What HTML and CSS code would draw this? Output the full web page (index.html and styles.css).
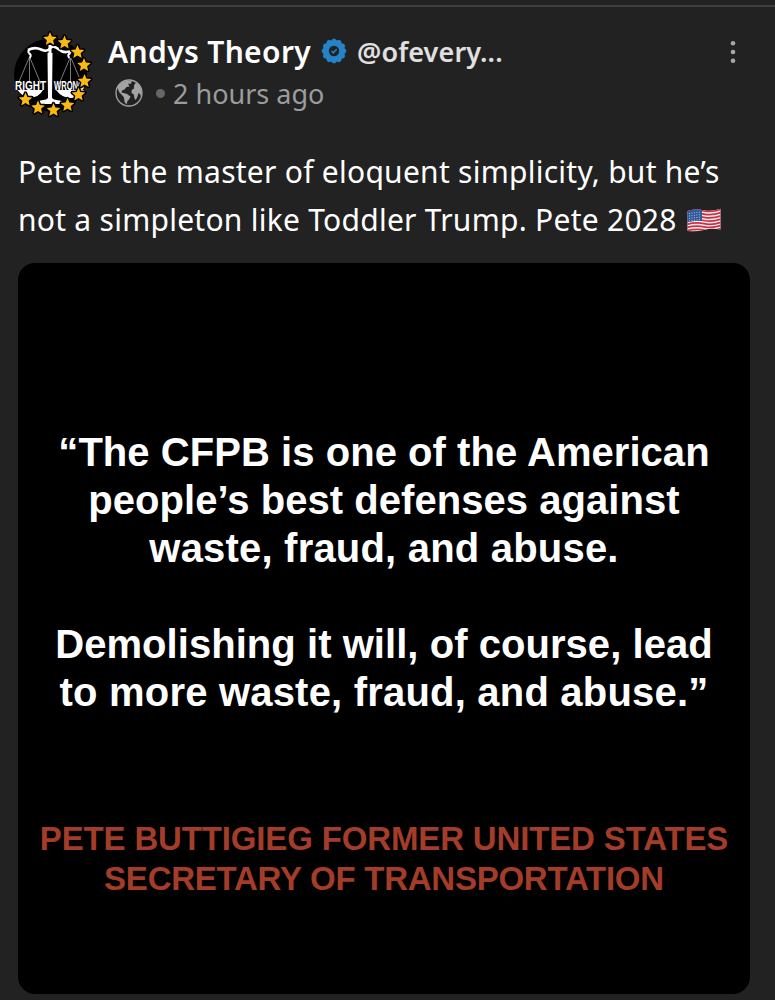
FILE: index.html
```html
<!DOCTYPE html>
<html lang="en">
<head>
<meta charset="utf-8">
<title>Andys Theory</title>
<link rel="stylesheet" href="styles.css">
</head>
<body>
<article class="post">
  <header class="head">
    <svg class="avatar" viewBox="10 30 84 88" aria-hidden="true">
      <defs>
        <path id="star" d="M0-6.400 1.700-2.200 6.300-1.900 2.800 1 3.900 5.500 0 3-3.900 5.500-2.800 1-6.300-1.900-1.700-2.200Z" fill="#fdb913"/>
        <path id="edge" d="M0-6.400 1.700-2.200 6.300-1.900 2.800 1 3.900 5.500 0 3-3.900 5.500-2.800 1-6.300-1.900-1.700-2.200Z" fill="#fdb913" stroke="#000" stroke-width="3.500" stroke-linejoin="round"/>
        <g id="starred"><use href="#edge"/><path d="M0-7 1.900-2.400 6.800-2 3.100 1.200 4.200 6 0 3.400-4.200 6-3.100 1.200-6.800-2-1.900-2.400Z" fill="#fdb913"/></g>
      </defs>
      <circle cx="50.500" cy="75" r="36.500" fill="#000"/>
      <path d="M29 58 18 84M29.500 58v25M30 58 41 84M70 58 59 84M70.500 58v25M71 58 82 84" stroke="#999" stroke-width=".8" fill="none"/>
      <path d="M17.500 90H43Q39 97.500 30 97.500 23 97.500 17.500 90M56 90H84Q80 98 71 98T56 90" fill="#fff"/>
      <text class="scale-label" x="15" y="90" textLength="31" lengthAdjust="spacingAndGlyphs">RIGHT</text>
      <text class="scale-label" x="54" y="90" textLength="30" lengthAdjust="spacingAndGlyphs">WRONG</text>
      <path d="M48.500 45h3v9h-3zM47.500 53h5l-.5 45 2 1.500 8 1.500v3H38v-3l8-1.500 2-1.500z" fill="#fff"/>
      <path d="M28 50Q35 46.500 41 49.500T50 48.500T59 49.500T72 50" fill="none" stroke="#fff" stroke-width="2.600"/>
      <path d="M28.500 50v3m0 0q4 2 1 5m41-8v3m0 0q-4 2-1 5" fill="none" stroke="#fff" stroke-width="2"/>
      <use href="#starred" x="50" y="39"/><use href="#starred" x="64.500" y="42.500"/><use href="#starred" x="77.500" y="52"/><use href="#starred" x="84" y="65"/><use href="#starred" x="84.500" y="81"/><use href="#starred" x="78.500" y="94.500"/><use href="#starred" x="67.500" y="105"/><use href="#starred" x="53.500" y="110"/><use href="#starred" x="38" y="107.500"/><use href="#starred" x="25.500" y="99.500"/>
    </svg>
    <div class="who">
      <div class="row">
        <span class="name">Andys Theory</span>
        <svg class="badge" viewBox="-13 -13 26 26" aria-hidden="true">
          <g fill="#2584c8"><circle r="10.800"/>
          <path id="cog" d="M-3-10-1.200-12.200H1.200L3-10V10L1.200 12.200H-1.200L-3 10Z"/>
          <use href="#cog" transform="rotate(30)"/><use href="#cog" transform="rotate(60)"/><use href="#cog" transform="rotate(90)"/><use href="#cog" transform="rotate(120)"/><use href="#cog" transform="rotate(150)"/></g>
          <circle r="5.200" fill="#222"/>
          <path d="M-2.500 0-.7 1.800 2.700-1.800" fill="none" stroke="#2584c8" stroke-width="1.500"/>
        </svg>
        <span class="handle">@ofevery...</span>
      </div>
      <div class="row meta">
        <svg class="globe" viewBox="0 0 28 28" aria-hidden="true">
          <circle cx="14" cy="14" r="13" fill="none" stroke="#a3a3a3" stroke-width="1.300"/>
          <path d="M2.500 8.500Q6 2 13 1.500L17 2.500 15.500 5 13 4.500 14.500 7.500 11.500 8 9.500 10.500 7 11.500 6.500 13.500 8.500 14 12 15 15.500 17.500 14 20.500 12.500 22 11.500 25.500 9.500 23 9 18.500 7 16 4 13Z" fill="#a3a3a3"/>
          <path d="M19 6.500 20.500 4 23 4.500 26 9 27 14 26 17 24.500 14.500 23.500 14 22.500 17.500 20.800 21 19.500 19.500 18.800 15.500 16.500 14 16.700 11 19 9.500Z" fill="#a3a3a3"/>
        </svg>
        <span class="dot"></span>
        <span class="time">2 hours ago</span>
      </div>
    </div>
    <svg class="more" viewBox="0 0 6 24" aria-hidden="true"><g fill="#a8a8a8"><circle cx="3" cy="3.300" r="2.300"/><circle cx="3" cy="12" r="2.300"/><circle cx="3" cy="20.700" r="2.300"/></g></svg>
  </header>
  <p class="body">
    <span class="line">Pete is the master of eloquent simplicity, but he’s</span>
    <span class="line">not a simpleton like Toddler Trump. Pete 2028 <svg class="flag" viewBox="0 0 34 24" role="img" aria-label="United States flag">
      <defs><clipPath id="wave"><path d="M.5 3Q9 .5 17 2.200T33.500.8V21.500Q25 20 17 22T.5 23Z"/></clipPath></defs>
      <g clip-path="url(#wave)"><path d="M0 0h34v24H0z" fill="#f3eff0"/>
      <g fill="none" stroke="#cc3042" stroke-width="1.750"><path d="M0 3.500Q9 1.200 17 2.900T34 1.400M0 6.700Q9 4.400 17 6.100T34 4.600M0 9.900Q9 7.600 17 9.300T34 7.800M0 13.100Q9 10.800 17 12.500T34 11M0 16.300Q9 14 17 15.700T34 14.200M0 19.500Q9 17.200 17 18.900T34 17.400M0 22.700Q9 20.400 17 22.100T34 20.600"/></g>
      <path d="M0 1Q8 0 15 2V13Q8 12 0 14.500Z" fill="#31599c"/>
      <path d="M2 5.500 14 4M2 8 14 6.500M2 10.500 14 9M2 12.800 14 11.500" stroke="#b9c9e2" stroke-width=".9" stroke-dasharray="1 1.500"/></g>
    </svg></span>
  </p>
  <section class="card">
    <blockquote class="quote">
      <p class="para"><span class="line">“The CFPB is one of the American</span><span class="line">people’s best defenses against</span><span class="line airy">waste, fraud, and abuse.</span></p>
      <p class="para"><span class="line">Demolishing it will, of course, lead</span><span class="line airy">to more waste, fraud, and abuse.”</span></p>
    </blockquote>
    <p class="source"><span class="line">PETE BUTTIGIEG FORMER UNITED STATES</span><span class="line tight">SECRETARY OF TRANSPORTATION</span></p>
  </section>
</article>
</body>
</html>
```
FILE: styles.css
```css
* { box-sizing: border-box; }
body { margin: 0; height: 1000px; overflow: hidden; background: #222; font-family: "Noto Sans", sans-serif; }
p, blockquote { margin: 0; }
svg { display: block; flex: none; }
.line { display: block; white-space: nowrap; }
.post { margin-top: 5px; border-top: 2px solid #3e3e3e; }
.head { display: flex; align-items: flex-start; padding: 23px 39px 0 10px; }
.avatar { width: 84px; height: 88px; }
.scale-label { font: bold 12.5px "Liberation Sans", sans-serif; fill: #fff; }
.who { flex: 1; padding: 0 0 0 14px; }
.row { display: flex; align-items: center; height: 42px; white-space: nowrap; }
.name { font-size: 30px; font-weight: 600; letter-spacing: .35px; color: #fff; }
.badge { width: 26px; height: 26px; margin: 0 10px 0 10px; }
.handle { font-size: 27px; font-weight: 600; letter-spacing: .1px; color: #e0e0e0; }
.meta { padding-left: 7px; }
.globe { width: 28px; height: 28px; }
.dot { width: 9px; height: 9px; margin: 0 8px 0 13px; border-radius: 50%; background: #666; }
.time { font-size: 27px; color: #9c9c9c; }
.more { width: 6px; height: 24px; margin-top: 10px; }
.body { padding: 30px 0 0 18px; font-size: 30px; line-height: 48px; letter-spacing: .26px; color: #fff; }
.flag { display: inline-block; width: 34px; height: 24px; margin-left: 2px; vertical-align: -1px; }
.card { width: 732px; height: 731px; margin: 19px 0 0 18px; padding-top: 165px; border-radius: 17px; background: #000; font-family: "Liberation Sans", sans-serif; font-weight: bold; text-align: center; }
.quote { font-size: 40px; line-height: 48.2px; letter-spacing: .05px; color: #fff; }
.airy { letter-spacing: .2px; }
.para + .para { margin-top: 47px; }
.source { margin-top: 103px; font-size: 33px; line-height: 40px; letter-spacing: -.15px; color: #a33c28; }
.tight { letter-spacing: -.25px; }
```
